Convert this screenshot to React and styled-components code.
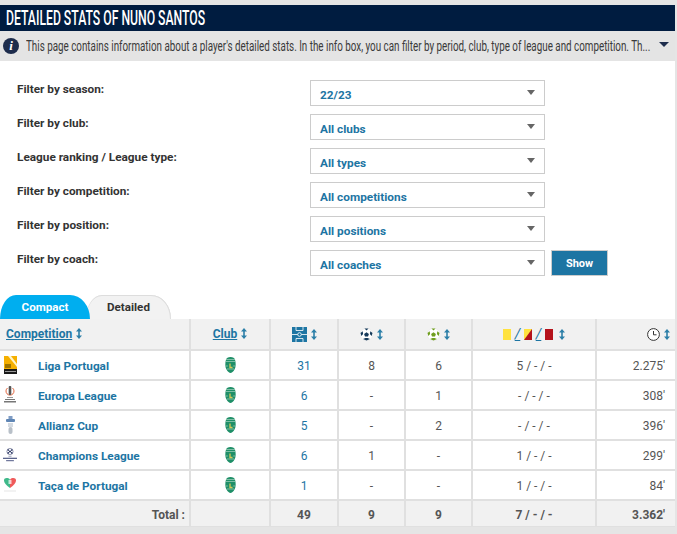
import React from 'react'
import styled, { createGlobalStyle } from 'styled-components'

const GlobalStyle = createGlobalStyle`
  html, body {
    margin: 0;
    background: #e5e5e5;
    font-family: Roboto, "Noto Sans", sans-serif;
  }
`

const Panel = styled.div`
  width: 675px;
  height: 522px;
  margin-top: 5px;
  background: white;
  overflow: hidden;
`
const Header = styled.h2`
  margin: 0;
  height: 26px;
  padding-left: 6px;
  background: #001c40;
`
const HeaderText = styled.span`
  display: block;
  width: 340px;
  color: white;
  font-weight: 500;
  font-size: 20px;
  line-height: 26px;
  white-space: nowrap;
  transform: scaleX(0.61);
  transform-origin: left center;
`
const InfoBar = styled.div`
  height: 30px;
  display: flex;
  align-items: center;
  padding: 0 6px 0 3px;
  gap: 7px;
  background: #e4e4e4;
`
const InfoClip = styled.div`
  flex: 1;
  min-width: 0;
`
const InfoText = styled.span`
  display: block;
  width: 950px;
  color: #3a3a3a;
  font-size: 15px;
  white-space: nowrap;
  transform: scaleX(0.655);
  transform-origin: left center;
`
const InfoCircle = styled.span`
  width: 16px;
  height: 16px;
  border-radius: 50%;
  background: #1d2c4c;
  color: white;
  font: italic 700 13px/16px "Liberation Serif", serif;
  text-align: center;
`
const Caret = styled.span`
  width: 0;
  height: 0;
  margin-top: -3px;
  border-left: ${(p) => p.$size || 4}px solid transparent;
  border-right: ${(p) => p.$size || 4}px solid transparent;
  border-top: 5px solid ${(p) => p.$color || '#666'};
`
const Filters = styled.div`
  display: grid;
  grid-template-columns: 287px 235px auto;
  column-gap: 6px;
  row-gap: 8px;
  padding: 19px 0 0 17px;
  height: 234px;
  box-sizing: border-box;
  align-content: start;
`
const FilterLabel = styled.label`
  grid-column: 1;
  padding-top: 1px;
  font-size: 11.8px;
  font-weight: 700;
  color: #333;
  line-height: 16px;
`
const Select = styled.div`
  grid-column: 2;
  height: 26px;
  box-sizing: border-box;
  border: 1px solid #ccc;
  display: flex;
  align-items: center;
  justify-content: space-between;
  padding: 3px 9px 0 9px;
  color: #1d75a3;
  font-size: 11.8px;
  font-weight: 700;
`
const SelectCaret = styled(Caret)`
  margin-top: -5px;
`
const ShowButton = styled.button`
  grid-column: 3;
  width: 57px;
  height: 26px;
  padding: 0;
  border: 1px solid #ccc;
  background: #1d75a3;
  color: white;
  font-family: inherit;
  font-size: 11px;
  font-weight: 700;
`
const Tabs = styled.div`
  display: flex;
  height: 24px;
`
const Tab = styled.div`
  width: ${(p) => p.$width}px;
  margin-left: ${(p) => p.$offset || 0}px;
  border-radius: 16px 20px 0 0 / 24px 24px 0 0;
  background: ${(p) => (p.$active ? '#00aeef' : '#f2f2f2')};
  color: ${(p) => (p.$active ? 'white' : '#333')};
  box-shadow: ${(p) => (p.$active ? 'none' : 'inset 0 1px 0 #ddd, inset -1px 0 0 #ddd')};
  text-align: center;
  font-size: 11.6px;
  font-weight: 700;
  line-height: 24px;
  z-index: ${(p) => (p.$active ? 1 : 0)};
`
const Table = styled.table`
  width: 675px;
  table-layout: fixed;
  border-collapse: collapse;
  font-size: 12px;
  color: #555;
`
const Head = styled.th`
  height: 30px;
  padding: 0;
  background: #f1f1f1;
  border: solid #e0e0e0;
  border-width: 0 2px 2px 0;
  text-align: ${(p) => p.$align || 'center'};
  padding-left: ${(p) => p.$pad || 0}px;
  padding-right: ${(p) => p.$padRight || 0}px;
  white-space: nowrap;
  &:last-child { border-right: 0; }
`
const HeadLink = styled.a`
  color: #1d75a3;
  font-weight: 700;
  text-decoration: underline;
`
const Cell = styled.td`
  height: 26px;
  padding: 2px 0 0;
  border: solid #e0e0e0;
  border-width: 0 2px 2px 0;
  text-align: ${(p) => p.$align || 'center'};
  padding-right: ${(p) => p.$padRight || 0}px;
  color: ${(p) => (p.$link ? '#1d75a3' : '#555')};
  &:last-child { border-right: 0; }
`
const NameCell = styled(Cell)`
  text-align: left;
`
const NameRow = styled.div`
  display: flex;
  align-items: center;
  padding-left: 3px;
`
const LogoBox = styled.span`
  width: 14px;
  height: 19px;
  margin: -2px 21px 0 0;
  display: flex;
  justify-content: center;
`
const CompName = styled.a`
  color: #1d75a3;
  font-size: 11.8px;
  font-weight: 700;
`
const CrestBox = styled.span`
  display: block;
  height: 16px;
  margin-top: -3px;
`
const TotalCell = styled(Cell)`
  height: 23px;
  background: #f1f1f1;
  font-weight: 700;
  color: #555;
`
const IconRow = styled.span`
  display: inline-flex;
  align-items: center;
  gap: ${(p) => p.$gap || 4}px;
  vertical-align: middle;
`
const CardSep = styled.span`
  width: 13px;
  color: #1d75a3;
  font-size: 14px;
  line-height: 14px;
  font-style: italic;
  text-align: center;
  text-decoration: underline;
  font-weight: 400;
`
const CardGroup = styled.span`
  display: inline-flex;
  align-items: center;
`

const SortIcon = ({ inline }) => (
  <svg width="6" height="11" viewBox="0 0 6 11" style={inline ? { marginLeft: 4, verticalAlign: -1 } : undefined}>
    <path d="M3 0 6 3.500H3.800V7.500H6L3 11 0 7.500H2.200V3.500H0z" fill="#2c7fa8" />
  </svg>
)

const PitchIcon = () => (
  <svg width="15" height="15" viewBox="0 0 15 15">
    <rect width="15" height="15" fill="#1d75a3" />
    <path d="M0 7.500h15M4 0v3.500h7V0M4 15v-3.500h7V15" stroke="white" strokeWidth=".8" fill="none" />
    <circle cx="7.500" cy="7.500" r="1.800" stroke="white" strokeWidth=".8" fill="#1d75a3" />
  </svg>
)

const BallIcon = ({ color }) => (
  <svg width="13" height="13" viewBox="0 0 13 13">
    <circle cx="6.500" cy="6.500" r="6.200" fill="white" stroke="#ddd" strokeWidth=".4" />
    <path d="M6.500 4.200l2.400 1.700-.9 2.700H5L4.100 5.900z" fill={color} />
    <path d="M4.500.6h4L6.500 2.400zM.5 5l2.200-1.700.4 2.800-1.700 2zM12.500 5l-2.200-1.700-.4 2.800 1.700 2zM3 11l2.500-1h2l2.500 1-3.500 1.600z" fill={color} />
  </svg>
)

const CardIcon = ({ type }) => (
  <svg width="8" height="11" viewBox="0 0 8 11">
    <rect width="8" height="11" fill={type === 'red' ? '#b5121b' : '#ffe23f'} />
    {type === 'split' && <path d="M8 0v11H0z" fill="#b5121b" />}
  </svg>
)

const ClockIcon = () => (
  <svg width="13" height="13" viewBox="0 0 13 13">
    <circle cx="6.500" cy="6.500" r="5.900" fill="white" stroke="#333" strokeWidth="1" />
    <path d="M6.500 3v3.800h3" stroke="#333" strokeWidth="1" fill="none" />
  </svg>
)

const ClubCrest = () => (
  <svg width="11" height="16" viewBox="0 0 11 16">
    <path d="M5.500 0C8 0 9.500 1 10 2.500 11 6 11 10 9.500 12.500 8.500 14.500 6.500 16 5.500 16 4.500 16 2.500 14.500 1.500 12.500 0 10 0 6 1 2.500 1.500 1 3 0 5.500 0z" fill="#1f8f68" />
    <path d="M1 2.500h9M.8 4.500h9.400M.8 9h2M8.200 9h2M2 12h7" stroke="#a9d6c2" strokeWidth=".7" />
    <path d="M5 6.500v4h2.500" stroke="#d8c85a" strokeWidth="1.300" fill="none" />
  </svg>
)

const LigaLogo = () => (
  <svg width="13" height="18" viewBox="0 0 13 18">
    <rect width="13" height="14" fill="#f5b000" />
    <path d="M4 0h3l6 8v3z" fill="#fff4c8" />
    <rect x="1" y="8.500" width="6" height="1" fill="#4a3a00" />
    <rect x="1" y="10.500" width="6" height="1" fill="#4a3a00" />
    <rect y="13" width="13" height="5" fill="#1a1a1a" />
    <rect x="1" y="15" width="11" height="1" fill="#999" />
  </svg>
)

const EuropaLogo = () => (
  <svg width="12" height="17" viewBox="0 0 12 17">
    <path d="M3.500 2A4 4 0 1 0 8.500 2" fill="none" stroke="#e2633a" strokeWidth="1" />
    <rect x="4.700" y="0" width="2.600" height="9" rx="1" fill="#555" />
    <rect x="3" y="11" width="6" height="1" fill="#999" />
    <rect x="1" y="13" width="10" height="1" fill="#777" />
    <rect y="15" width="12" height="1.500" fill="#777" />
  </svg>
)

const AllianzLogo = () => (
  <svg width="9" height="19" viewBox="0 0 9 19">
    <rect x="2.500" width="4" height="3" fill="#7f9cc4" />
    <rect y="3" width="9" height="3" rx="1" fill="#5f86b5" />
    <rect x="2" y="7" width="5" height="4" fill="#d5dbe2" />
    <rect x="2.500" y="11" width="4" height="7" rx="2" fill="#b8c0c8" />
  </svg>
)

const ChampionsLogo = () => (
  <svg width="18" height="18" viewBox="0 0 18 18">
    <circle cx="9" cy="4.500" r="4" fill="white" stroke="#1e2a5a" strokeWidth=".6" />
    <circle cx="9" cy="4.500" r="1.300" fill="#1e2a5a" />
    <circle cx="6.800" cy="2.700" r="1" fill="#1e2a5a" />
    <circle cx="11.200" cy="2.700" r="1" fill="#1e2a5a" />
    <circle cx="6.800" cy="6.300" r="1" fill="#1e2a5a" />
    <circle cx="11.200" cy="6.300" r="1" fill="#1e2a5a" />
    <rect x="7" y="10" width="4" height="1" fill="#8088a8" />
    <rect y="12.500" width="18" height="1.500" fill="#4a5480" />
    <rect x="4" y="15.500" width="10" height="1.500" fill="#6a7298" />
  </svg>
)

const TacaLogo = () => (
  <svg width="14" height="17" viewBox="0 0 14 17">
    <path d="M7 12C3 9 1 7 1 4.500c0-3 4-3 6-1z" fill="#3fb98a" />
    <path d="M7 12c4-3 6-5 6-7.500 0-3-4-3-6-1z" fill="#ef5a5a" />
    <path d="M5.500 4h3v4h-3z" fill="#fff" opacity=".7" />
    <rect x="1" y="14.500" width="12" height="1" fill="#e6e6e6" />
  </svg>
)

const labels = [
  ['Filter by season:', '22/23'],
  ['Filter by club:', 'All clubs'],
  ['League ranking / League type:', 'All types'],
  ['Filter by competition:', 'All competitions'],
  ['Filter by position:', 'All positions'],
  ['Filter by coach:', 'All coaches'],
]

const rows = [
  { name: 'Liga Portugal', logo: <LigaLogo />, apps: '31', goals: '8', assists: '6', cards: '5 / - / -', mins: "2.275'" },
  { name: 'Europa League', logo: <EuropaLogo />, apps: '6', goals: '-', assists: '1', cards: '- / - / -', mins: "308'" },
  { name: 'Allianz Cup', logo: <AllianzLogo />, apps: '5', goals: '-', assists: '2', cards: '- / - / -', mins: "396'" },
  { name: 'Champions League', logo: <ChampionsLogo />, apps: '6', goals: '1', assists: '-', cards: '1 / - / -', mins: "299'" },
  { name: 'Taça de Portugal', logo: <TacaLogo />, apps: '1', goals: '-', assists: '-', cards: '1 / - / -', mins: "84'" },
]

function App() {
  return (
    <>
      <GlobalStyle />
      <Panel>
        <Header>
          <HeaderText>DETAILED STATS OF NUNO SANTOS</HeaderText>
        </Header>
        <InfoBar>
          <InfoCircle>i</InfoCircle>
          <InfoClip>
            <InfoText>
              This page contains information about a player's detailed stats. In the info box, you can filter by period, club, type of league and competition. Th...
            </InfoText>
          </InfoClip>
          <Caret $size={5} $color="#1d2c4c" />
        </InfoBar>
        <Filters>
          {labels.map(([label, value], i) => (
            <React.Fragment key={label}>
              <FilterLabel>{label}</FilterLabel>
              <Select>
                {value}
                <SelectCaret />
              </Select>
              {i === labels.length - 1 && <ShowButton>Show</ShowButton>}
            </React.Fragment>
          ))}
        </Filters>
        <Tabs>
          <Tab $active $width={90}>Compact</Tab>
          <Tab $width={85} $offset={-4}>Detailed</Tab>
        </Tabs>
        <Table>
          <colgroup>
            <col width="190" />
            <col width="80" />
            <col width="68" />
            <col width="67" />
            <col width="67" />
            <col width="124" />
            <col width="79" />
          </colgroup>
          <thead>
            <tr>
              <Head $align="left" $pad={6}>
                <HeadLink>Competition</HeadLink>
                <SortIcon inline />
              </Head>
              <Head>
                <HeadLink>Club</HeadLink>
                <SortIcon inline />
              </Head>
              <Head><IconRow><PitchIcon /><SortIcon /></IconRow></Head>
              <Head><IconRow><BallIcon color="#163a5a" /><SortIcon /></IconRow></Head>
              <Head><IconRow><BallIcon color="#6f9e1f" /><SortIcon /></IconRow></Head>
              <Head>
                <IconRow $gap={6}>
                  <CardGroup>
                    <CardIcon />
                    <CardSep>/</CardSep>
                    <CardIcon type="split" />
                    <CardSep>/</CardSep>
                    <CardIcon type="red" />
                  </CardGroup>
                  <SortIcon />
                </IconRow>
              </Head>
              <Head $align="right" $padRight={5}><IconRow><ClockIcon /><SortIcon /></IconRow></Head>
            </tr>
          </thead>
          <tbody>
            {rows.map((row) => (
              <tr key={row.name}>
                <NameCell>
                  <NameRow>
                    <LogoBox>{row.logo}</LogoBox>
                    <CompName>{row.name}</CompName>
                  </NameRow>
                </NameCell>
                <Cell><CrestBox><ClubCrest /></CrestBox></Cell>
                <Cell $link>{row.apps}</Cell>
                <Cell>{row.goals}</Cell>
                <Cell>{row.assists}</Cell>
                <Cell>{row.cards}</Cell>
                <Cell $align="right" $padRight={10}>{row.mins}</Cell>
              </tr>
            ))}
            <tr>
              <TotalCell $align="right" $padRight={4}>Total :</TotalCell>
              <TotalCell />
              <TotalCell>49</TotalCell>
              <TotalCell>9</TotalCell>
              <TotalCell>9</TotalCell>
              <TotalCell>7 / - / -</TotalCell>
              <TotalCell $align="right" $padRight={10}>3.362'</TotalCell>
            </tr>
          </tbody>
        </Table>
      </Panel>
    </>
  )
}

export default App
